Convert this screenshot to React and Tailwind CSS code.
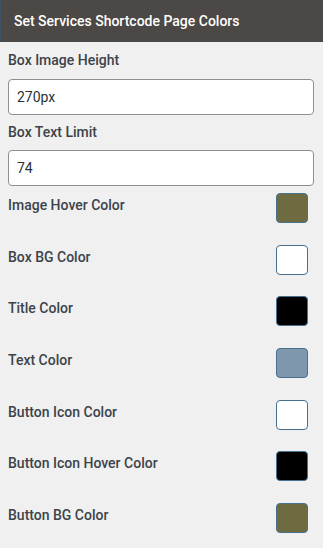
import React, { useState } from 'react';

const colorRows = [
  { label: 'Image Hover Color', color: '#6f6b41' },
  { label: 'Box BG Color', color: '#ffffff' },
  { label: 'Title Color', color: '#000000' },
  { label: 'Text Color', color: '#7f97ad' },
  { label: 'Button Icon Color', color: '#ffffff' },
  { label: 'Button Icon Hover Color', color: '#000000' },
  { label: 'Button BG Color', color: '#6f6b41' },
];

const App = () => {
  const [imageHeight, setImageHeight] = useState('270px');
  const [textLimit, setTextLimit] = useState('74');

  return (
    <div className="w-[323px] h-[548px] bg-[#f0f0f0] overflow-hidden font-['Roboto',sans-serif]">
      <div className="h-[42px] bg-[#4b4845] border-l border-[#3d5466] flex items-center pl-[13px]">
        <h2 className="text-[14px] font-medium text-white">Set Services Shortcode Page Colors</h2>
      </div>

      <div className="px-2">
        <label className="block mt-[8px] leading-5 text-[14px] font-medium text-[#3c434a]">Box Image Height</label>
        <input
          value={imageHeight}
          onChange={(e) => setImageHeight(e.target.value)}
          className="mt-[9px] block w-[306px] h-[36px] rounded-[4px] border border-[#8c8f94] bg-white px-[8px] text-[14px] text-[#2c3338] outline-none"
        />

        <label className="block mt-[7px] leading-5 text-[14px] font-medium text-[#3c434a]">Box Text Limit</label>
        <input
          value={textLimit}
          onChange={(e) => setTextLimit(e.target.value)}
          className="mt-[8px] block w-[306px] h-[36px] rounded-[4px] border border-[#8c8f94] bg-white px-[8px] text-[14px] text-[#2c3338] outline-none"
        />

        <div className="mt-[7px] flex flex-col gap-[21.7px]">
          {colorRows.map((row) => (
            <div key={row.label} className="flex items-start justify-between pr-[7px]">
              <span className="pt-[2px] leading-5 text-[14px] font-medium text-[#3c434a]">{row.label}</span>
              <div
                className="w-[32px] h-[30px] rounded-[4px] border border-[#47708f]"
                style={{ backgroundColor: row.color }}
              />
            </div>
          ))}
        </div>
      </div>
    </div>
  );
};

export default App;
